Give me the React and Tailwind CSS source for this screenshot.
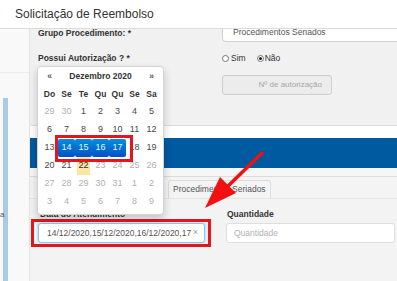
import React from 'react';

const weeks = [
  [29, 30, 1, 2, 3, 4, 5],
  [6, 7, 8, 9, 10, 11, 12],
  [13, 14, 15, 16, 17, 18, 19],
  [20, 21, 22, 23, 24, 25, 26],
  [27, 28, 29, 30, 31, 1, 2],
  [3, 4, 5, 6, 7, 8, 9],
];
const dayNames = ['Do', 'Se', 'Te', 'Qu', 'Qu', 'Se', 'Sa'];

const DatePicker = () => {
  return (
    <div className="absolute left-[37px] top-[66px] w-[127px] bg-white border border-[#d4d4d4] rounded-[4px] shadow-[0_4px_9px_rgba(0,0,0,0.2)] px-[3px] pt-[1px] pb-[3px] z-20">
      <div className="relative">
        <div className="grid grid-cols-7 h-[17px] items-center text-[8.5px] font-bold text-[#333]">
          <span className="text-center text-[#555]">«</span>
          <span className="col-span-5 text-center">Dezembro 2020</span>
          <span className="text-center text-[#555]">»</span>
        </div>
        <div className="grid grid-cols-7 h-[18px] items-center text-[8.5px] font-bold text-[#333]">
          {dayNames.map((d, i) => (
            <span key={i} className="text-center">{d}</span>
          ))}
        </div>
        {weeks.map((week, r) => (
          <div key={r} className="grid grid-cols-7 h-[18px] text-[9px]">
            {week.map((d, c) => {
              const old = (r === 0 && d > 20) || (r >= 4 && d < 20) || r === 5;
              const future = (r === 3 && d > 22) || (r === 4 && d > 20);
              const active = r === 2 && c >= 1 && c <= 4;
              const today = r === 3 && d === 22;
              if (active) {
                return (
                  <span key={c} className="flex items-center justify-center rounded-[2px] bg-gradient-to-b from-[#0a8fdc] to-[#0350c6] text-[#e8f6ff]">
                    {d}
                  </span>
                );
              }
              if (today) {
                return (
                  <span key={c} className="flex items-center justify-center">
                    <span className="w-[13px] h-[18px] flex items-center justify-center bg-[#fde5a3] text-[#333]">{d}</span>
                  </span>
                );
              }
              return (
                <span key={c} className={`flex items-center justify-center ${old || future ? 'text-[#b0b0b0]' : 'text-[#484848]'}`}>
                  {d}
                </span>
              );
            })}
          </div>
        ))}
        {/* red annotation box */}
        <div className="absolute left-[14px] top-[67px] w-[78px] h-[27px] border-[3px] border-[#e3161d]" />
      </div>
    </div>
  );
};

const Arrow = () => (
  <svg className="absolute left-0 top-0 z-30 pointer-events-none" width="397" height="281" viewBox="0 0 397 281">
    <line x1="262" y1="153" x2="226" y2="188" stroke="#f21111" strokeWidth="3.5" strokeLinecap="round" />
    <polygon points="205,208 220,177 236,193" fill="#f21111" />
  </svg>
);

export default function App() {
  return (
    <div className="relative w-[397px] h-[281px] overflow-hidden bg-white text-[#333]" style={{ fontFamily: '"Liberation Sans", Arial, sans-serif' }}>
      {/* header */}
      <div className="h-[29px] bg-white border-b border-[#dcdcdc] flex items-center pl-[15px]">
        <h1 className="text-[12px] text-[#333] leading-none pb-[1px]">Solicitação de Reembolso</h1>
      </div>

      <div className="flex h-[252px] overflow-hidden">
        {/* left strip */}
        <div className="relative w-[30px] bg-[#f9f9f9] border-r border-[#e2e2e2] flex flex-col">
          <div className="h-[44px] border-b border-[#ececec]" />
          <div className="ml-[3px] mt-[25px] w-[5px] flex-1 bg-[#aacbe6]" />
          <span className="absolute left-0 top-[180px] text-[8px] text-[#555]">a</span>
        </div>

        {/* content */}
        <div className="flex-1 flex flex-col bg-[#f3f3f3]">
          <div className="h-[97px] bg-[#f1f1f1] border-b border-[#dcdcdc] rounded-bl-[4px] pl-[8px] overflow-hidden">
            <div className="flex gap-[17px] -mt-[7px]">
              <div className="w-[167px] pt-[6px] text-[8.5px] leading-[10px] font-bold text-[#333]">Grupo Procedimento: *</div>
              <div className="flex-1 h-[20px] bg-white border border-[#d0d0d0] rounded-bl-[4px] border-r-0 flex items-center pl-[10px] text-[8.5px] text-[#555]">
                Procedimentos Seriados
              </div>
            </div>
            <div className="flex gap-[17px] mt-[11px] items-center">
              <div className="w-[167px] text-[8.5px] leading-[10px] font-bold text-[#333]">Possui Autorização ? *</div>
              <div className="flex items-center text-[8.5px] text-[#333] h-[10px]">
                <span className="w-[7px] h-[7px] rounded-full border border-[#777] bg-white" />
                <span className="ml-[2px]">Sim</span>
                <span className="ml-[11px] w-[7px] h-[7px] rounded-full border border-[#777] bg-white flex items-center justify-center">
                  <span className="w-[3px] h-[3px] rounded-full bg-[#222]" />
                </span>
                <span className="ml-[1px]">Não</span>
              </div>
            </div>
            <div className="flex gap-[17px] mt-[4px]">
              <div className="w-[126px] h-[20px] bg-white border border-[#d0d0d0] rounded-[3px]" />
              <div className="w-[110px] h-[20px] mt-[8px] ml-[41px] bg-[#ececec] border border-[#cfcfcf] rounded-[3px] flex items-center justify-end pr-[9px] text-[8px] text-[#a6a6a6]">
                Nº de autorização
              </div>
            </div>
          </div>

          <div className="h-[12px] bg-white" />
          <div className="h-[30px] bg-[#005a9f]" />
          <div className="h-[9px] bg-[#f6f6f6] border-b border-[#dcdcdc]" />
          <div className="h-[21px] bg-[#f4f4f4] flex items-end pl-[138px]">
            <div className="h-[18px] px-[4px] border border-b-0 border-[#dcdcdc] rounded-t-[3px] bg-[#f4f4f4] flex items-center text-[8.5px] text-[#555]">
              Procedimentos Seriados
            </div>
          </div>

          <div className="flex-1 bg-[#f3f3f3] pl-[8px] pt-[10px] border-t border-[#e4e4e4]">
            <div className="flex gap-[21px]">
              <div className="w-[167px]">
                <div className="pl-[2px] text-[8.5px] leading-[10px] font-bold text-[#333]">Data do Atendimento</div>
                <div className="relative mt-[4px]">
                  <div className="h-[20px] bg-white border border-[#8fc2ea] rounded-[3px] shadow-[0_0_3px_rgba(102,175,233,0.6)] flex items-center pl-[8px] pr-[6px] text-[8.5px] text-[#555]">
                    <span className="flex-1 whitespace-nowrap overflow-hidden">14/12/2020,15/12/2020,16/12/2020,17</span>
                    <span className="text-[#9a9a9a] text-[9px]">×</span>
                  </div>
                  <div className="absolute -left-[7px] -right-[6px] -top-[4px] -bottom-[4px] border-[3px] border-[#e3161d]" />
                </div>
              </div>
              <div className="w-[169px]">
                <div className="pl-[1px] text-[8.5px] leading-[10px] font-bold text-[#333]">Quantidade</div>
                <div className="mt-[4px] h-[20px] bg-white border border-[#dedede] rounded-[3px] flex items-center pl-[7px] text-[8.5px] text-[#b0b0b0]">
                  Quantidade
                </div>
              </div>
            </div>
          </div>
        </div>
      </div>

      <DatePicker />
      <Arrow />
    </div>
  );
}
